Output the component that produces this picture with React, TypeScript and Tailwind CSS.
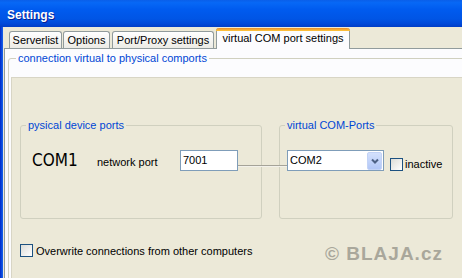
import React from "react";

function Checkbox() {
  return (
    <div className="w-[13px] h-[13px] shrink-0 border border-[#1C5180] bg-linear-to-br from-[#DCDCD7] to-[#FFFFFF]" />
  );
}

export default function App() {
  return (
    <div className="relative w-[462px] h-[278px] overflow-hidden bg-[#ECE9D8] flex flex-col text-[11px] leading-[13px] text-black font-['Liberation_Sans',Arial,sans-serif]">
      {/* Title bar */}
      <div className="h-[27px] shrink-0 flex items-center pl-[7px] pt-[3px] bg-[linear-gradient(180deg,#0A5FE9_0%,#0768F6_10%,#005BEF_35%,#0055E5_70%,#0048D8_88%,#003DC6_100%)]">
        <span className="text-white font-bold text-[12px] leading-[14px] [text-shadow:1px_1px_0_#0A1D8F]">
          Settings
        </span>
      </div>

      <div className="flex flex-1 min-h-0">
        {/* window frame */}
        <div className="w-[3px] shrink-0 bg-linear-to-r from-[#0525C8] to-[#1A63EC]" />
        <div className="w-[1px] shrink-0" />

        <div className="w-[480px] shrink-0 flex flex-col">
          {/* Tabs */}
          <div className="h-[21px] shrink-0 flex items-end">
            <div className="ml-[5px] w-[53px] h-[17px] border border-b-0 border-[#919B9C] rounded-t-[3px] bg-linear-to-b from-[#FFFFFF] to-[#ECEBE5] flex justify-center pt-[2px]">
              Serverlist
            </div>
            <div className="ml-[1px] w-[47px] h-[17px] border border-b-0 border-[#919B9C] rounded-t-[3px] bg-linear-to-b from-[#FFFFFF] to-[#ECEBE5] flex justify-center pt-[2px]">
              Options
            </div>
            <div className="ml-[2px] w-[102px] h-[17px] border border-b-0 border-[#919B9C] rounded-t-[3px] bg-linear-to-b from-[#FFFFFF] to-[#ECEBE5] flex justify-center pt-[2px]">
              Port/Proxy settings
            </div>
            <div className="relative z-10 ml-[2px] w-[134px] h-[21px] mb-[-1px] border-x border-[#919B9C] rounded-t-[3px] bg-[#FCFCFE] flex flex-col">
              <div className="-mx-px h-[3px] rounded-t-[3px] bg-linear-to-b from-[#E68B2C] to-[#FFC73C]" />
              <div className="flex justify-center pt-[1px]">virtual COM port settings</div>
            </div>
          </div>

          {/* Tab page */}
          <div className="flex-1 border-t border-l border-[#919B9C] bg-[#FCFCFE] pl-[3px] pt-[3px]">
            <fieldset className="min-w-0 h-[300px] border border-[#D0D0BF] rounded-[3px] pl-[2px]">
              <legend className="ml-[5px] px-[2px] leading-[13px] text-[#0046D5]">
                connection virtual to physical comports
              </legend>

              <div className="relative mt-[12px] h-[260px] border-t border-l border-[#D8D5C5] bg-[#ECE9D8]">
                <div className="flex items-start pl-[8px] pt-[41px]">
                  {/* left group */}
                  <fieldset className="min-w-0 w-[242px] h-[100px] shrink-0 border border-[#D0D0BF] rounded-[3px]">
                    <legend className="ml-[5px] px-[2px] leading-[13px] text-[#0046D5]">
                      pysical device ports
                    </legend>
                    <div className="flex items-start">
                      <span className="ml-[11px] mt-[18px] w-[65px] shrink-0 text-[17px] leading-[20px] font-['DejaVu_Sans_Condensed','DejaVu_Sans',sans-serif] [font-stretch:condensed]">
                        COM1
                      </span>
                      <span className="mt-[24px] w-[83px] shrink-0">network port</span>
                      <div className="mt-[18px] w-[58px] h-[21px] shrink-0 border border-[#7F9DB9] bg-white pl-[2px] pt-[3px]">
                        7001
                      </div>
                    </div>
                  </fieldset>

                  {/* right group */}
                  <fieldset className="min-w-0 ml-[17px] w-[174px] h-[100px] shrink-0 border border-[#D0D0BF] rounded-[3px]">
                    <legend className="ml-[5px] px-[2px] leading-[13px] text-[#0046D5]">
                      virtual COM-Ports
                    </legend>
                    <div className="flex items-start pl-[7px]">
                      <div className="mt-[18px] w-[97px] h-[21px] shrink-0 border border-[#7F9DB9] bg-white flex">
                        <span className="flex-1 pl-[2px] pt-[3px]">COM2</span>
                        <div className="mt-[1px] mr-[1px] w-[15px] h-[18px] rounded-[2px] border border-[#C3D3F6] bg-linear-to-b from-[#D4E1FD] to-[#B2C7F7] flex items-center justify-center">
                          <svg width="8" height="6" viewBox="0 0 8 6">
                            <path d="M1 1.5 L4 4.5 L7 1.5" stroke="#4D6185" strokeWidth="2" fill="none" />
                          </svg>
                        </div>
                      </div>
                      <div className="ml-[6px] mt-[26px] flex items-start">
                        <Checkbox />
                        <span className="ml-[2px]">inactive</span>
                      </div>
                    </div>
                  </fieldset>
                </div>

                <div className="flex items-start ml-[8px] mt-[25px]">
                  <Checkbox />
                  <span className="ml-[3px] mt-[1px]">Overwrite connections from other computers</span>
                </div>

                {/* connector line */}
                <div className="absolute left-[226px] top-[87px] w-[49px] h-[2px] border-t border-[#A5A398] bg-[#F2F1EA]" />
              </div>
            </fieldset>
          </div>
        </div>
      </div>

      {/* watermark */}
      <div className="absolute left-[325px] top-[244px] text-[19px] leading-[19px] font-bold tracking-[1px] text-[#A9A79B]">
        © BLAJA.cz
      </div>
    </div>
  );
}
